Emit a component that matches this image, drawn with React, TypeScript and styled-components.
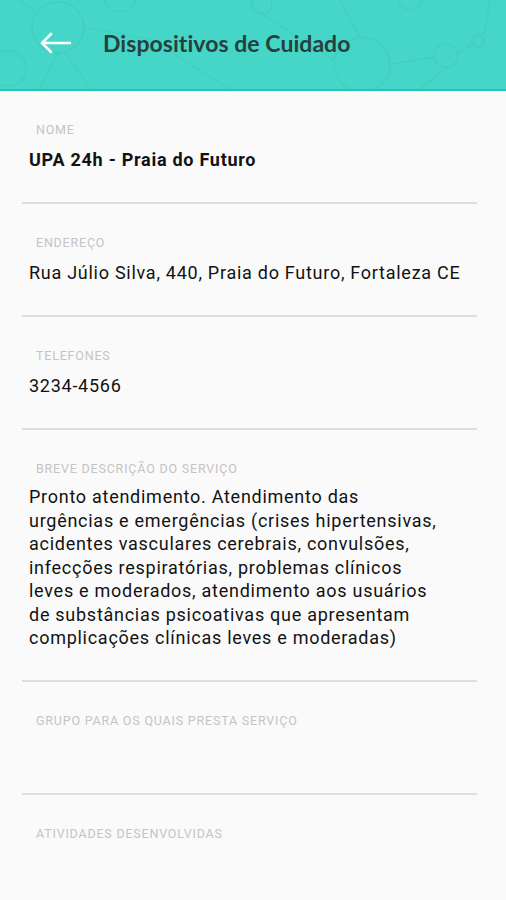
import React from "react";
import styled, { createGlobalStyle } from "styled-components";

const Global = createGlobalStyle`
  html, body { margin: 0; padding: 0; background: #fafafa; }
  body { font-family: Roboto, "Noto Sans", Arial, sans-serif; }
  * { box-sizing: border-box; }
`;

const Page = styled.div`
  width: 506px;
  min-height: 900px;
  background: #fafafa;
  overflow: hidden;
`;

const Header = styled.header`
  position: relative;
  height: 91px;
  background: #46d6c8;
  border-bottom: 2px solid #24c4b7;
  display: flex;
  align-items: center;
  padding: 0 0 3px 39px;
  gap: 31px;
  overflow: hidden;
`;

const Pattern = styled.svg`
  position: absolute;
  inset: 0;
  width: 100%;
  height: 100%;
  pointer-events: none;
`;

const BackButton = styled.button`
  position: relative;
  border: 0;
  background: none;
  padding: 0;
  width: 33px;
  height: 24px;
  display: flex;
  align-items: center;
  cursor: pointer;
`;

const Title = styled.h1`
  position: relative;
  margin: 0;
  font-family: Lato, "Open Sans", sans-serif;
  font-weight: 700;
  font-size: 23px;
  color: #27403d;
  letter-spacing: 0.05px;
`;

const List = styled.main`
  padding: 0 29px 40px 22px;
`;

const Field = styled.section`
  padding: 32px 0 30px;
  border-bottom: 2px solid #dedede;
`;

const Label = styled.div`
  font-size: 12.5px;
  line-height: 14px;
  height: 14px;
  color: #c4c4c4;
  text-transform: uppercase;
  letter-spacing: 0.8px;
  padding-left: 14px;
  margin-bottom: 11px;
  white-space: nowrap;
`;

const Value = styled.div<{ $bold?: boolean; $multi?: boolean }>`
  font-size: 18px;
  letter-spacing: 0.73px;
  line-height: ${(p) => (p.$multi ? "23.5px" : "24px")};
  min-height: 24px;
  font-weight: ${(p) => (p.$bold ? 700 : 400)};
  color: #121212;
  padding-left: 7px;
  margin-top: ${(p) => (p.$multi ? "-2px" : "0")};
`;

const Line = styled.span`
  display: block;
  white-space: nowrap;
`;

const description = [
  "Pronto atendimento. Atendimento das",
  "urgências e emergências (crises hipertensivas,",
  "acidentes vasculares cerebrais, convulsões,",
  "infecções respiratórias, problemas clínicos",
  "leves e moderados, atendimento aos usuários",
  "de substâncias psicoativas que apresentam",
  "complicações clínicas leves e moderadas)",
];

export default function App() {
  return (
    <Page>
      <Global />
      <Header>
        <Pattern viewBox="0 0 506 91" preserveAspectRatio="none">
          <g fill="none" stroke="rgba(0,70,60,0.05)" strokeWidth="1.5">
            <circle cx="58" cy="28" r="26" />
            <circle cx="120" cy="-4" r="16" />
            <circle cx="362" cy="66" r="28" />
            <circle cx="446" cy="57" r="12" />
            <circle cx="478" cy="42" r="6" />
            <circle cx="262" cy="4" r="10" />
            <circle cx="410" cy="-2" r="12" />
            <circle cx="8" cy="70" r="18" />
            <line x1="58" y1="54" x2="40" y2="91" />
            <line x1="66" y1="54" x2="90" y2="91" />
            <line x1="84" y1="28" x2="150" y2="40" />
            <line x1="150" y1="40" x2="230" y2="91" />
            <line x1="262" y1="14" x2="334" y2="62" />
            <line x1="390" y1="66" x2="434" y2="58" />
            <line x1="458" y1="54" x2="472" y2="45" />
            <line x1="340" y1="0" x2="360" y2="38" />
            <line x1="446" y1="69" x2="420" y2="91" />
            <line x1="490" y1="0" x2="484" y2="36" />
            <line x1="20" y1="0" x2="36" y2="12" />
          </g>
        </Pattern>
        <BackButton aria-label="Voltar">
          <svg width="32" height="22" viewBox="0 0 32 22" fill="none">
            <path
              d="M31 11H3M12 2L3 11l9 9"
              stroke="#ffffff"
              strokeWidth="2.6"
              strokeLinecap="round"
              strokeLinejoin="round"
            />
          </svg>
        </BackButton>
        <Title>Dispositivos de Cuidado</Title>
      </Header>
      <List>
        <Field>
          <Label>Nome</Label>
          <Value $bold>UPA 24h - Praia do Futuro</Value>
        </Field>
        <Field>
          <Label>Endereço</Label>
          <Value>Rua Júlio Silva, 440, Praia do Futuro, Fortaleza CE</Value>
        </Field>
        <Field>
          <Label>Telefones</Label>
          <Value>3234-4566</Value>
        </Field>
        <Field>
          <Label>Breve descrição do serviço</Label>
          <Value $multi>
            {description.map((l) => (
              <Line key={l}>{l}</Line>
            ))}
          </Value>
        </Field>
        <Field>
          <Label>Grupo para os quais presta serviço</Label>
          <Value />
        </Field>
        <Field>
          <Label>Atividades desenvolvidas</Label>
          <Value />
        </Field>
      </List>
    </Page>
  );
}
